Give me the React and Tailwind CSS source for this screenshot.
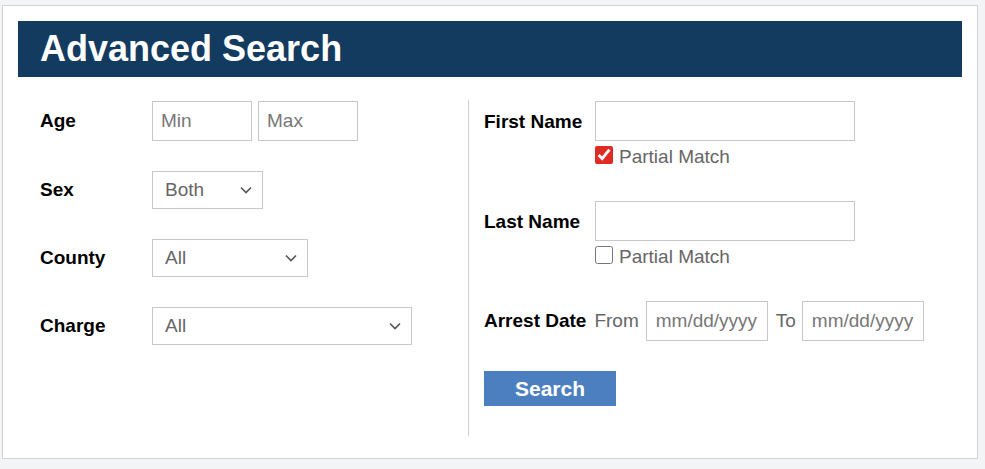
import React from "react";

const font = { fontFamily: '"Liberation Sans", Arial, sans-serif' };

function Chevron() {
  return (
    <svg
      className="pointer-events-none absolute right-[11px] top-1/2 -translate-y-1/2"
      width="12"
      height="8"
      viewBox="0 0 12 8"
      fill="none"
    >
      <path d="M1 1.5l5 5 5-5" stroke="#555" strokeWidth="1.6" />
    </svg>
  );
}

function Select({ value, width }) {
  return (
    <div className={`relative ${width}`}>
      <select
        defaultValue={value}
        className="block w-full h-[38px] appearance-none border border-[#c8c8c8] bg-white pl-3 pr-8 text-[19px] text-[#666] outline-none"
      >
        <option>{value}</option>
      </select>
      <Chevron />
    </div>
  );
}

function TextBox({ placeholder = "", width, pad = "px-2" }) {
  return (
    <input
      type="text"
      placeholder={placeholder}
      className={`block ${width} h-10 border border-[#c8c8c8] bg-white ${pad} text-[19px] text-[#666] placeholder:text-[#777] outline-none`}
    />
  );
}

function Row({ label, className = "", children }) {
  return (
    <div className={`flex items-center ${className}`}>
      <label className="w-[112px] text-[19px] font-bold text-black">{label}</label>
      {children}
    </div>
  );
}

function PartialMatch({ checked }) {
  return (
    <label className="flex items-center gap-[6px] mt-[4px] h-[20px] leading-none text-[19px] text-[#666]">
      <input
        type="checkbox"
        defaultChecked={checked}
        className="block w-[18px] h-[18px] m-0 accent-[#e02a24]"
      />
      <span className="pt-[3px]">Partial Match</span>
    </label>
  );
}

export default function App() {
  return (
    <div className="min-h-screen bg-[#f3f4f5] pt-[5px] pl-[2px] pr-[7px]" style={font}>
      <div className="h-[454px] border border-[#d2d2d2] bg-white px-[15px] pt-[15px]">
        <div className="h-14 bg-[#133a5f] pl-[22px] flex items-center">
          <h1 className="text-[36px] font-bold text-white leading-none">Advanced Search</h1>
        </div>

        <div className="flex pt-[23px]">
          {/* Left column */}
          <div className="w-[451px] pl-[22px] pt-px border-r border-[#cfcfcf] h-[336px] flex flex-col">
            <Row label="Age">
              <div className="flex gap-[6px]">
                <TextBox placeholder="Min" width="w-[100px]" />
                <TextBox placeholder="Max" width="w-[100px]" />
              </div>
            </Row>
            <Row label="Sex" className="mt-[30px]">
              <Select value="Both" width="w-[111px]" />
            </Row>
            <Row label="County" className="mt-[30px]">
              <Select value="All" width="w-[156px]" />
            </Row>
            <Row label="Charge" className="mt-[30px]">
              <Select value="All" width="w-[260px]" />
            </Row>
          </div>

          {/* Right column */}
          <div className="pl-[15px] pt-px flex flex-col">
            <div className="flex">
              <label className="w-[111px] text-[19px] font-bold text-black pt-[7px]">First Name</label>
              <div className="flex flex-col">
                <TextBox width="w-[260px]" />
                <PartialMatch checked />
              </div>
            </div>
            <div className="flex mt-[36px]">
              <label className="w-[111px] text-[19px] font-bold text-black pt-[7px]">Last Name</label>
              <div className="flex flex-col">
                <TextBox width="w-[260px]" />
                <PartialMatch checked={false} />
              </div>
            </div>
            <div className="flex items-center mt-[36px]">
              <label className="text-[19px] font-bold text-black mr-[8px]">Arrest Date</label>
              <span className="text-[19px] text-[#666] mr-[7px]">From</span>
              <TextBox placeholder="mm/dd/yyyy" width="w-[122px]" pad="px-[9px]" />
              <span className="text-[19px] text-[#666] ml-[8px] mr-[6px]">To</span>
              <TextBox placeholder="mm/dd/yyyy" width="w-[122px]" pad="px-[9px]" />
            </div>
            <button className="mt-[30px] w-[132px] h-[35px] bg-[#4c7fbf] text-white text-[21px] font-bold">
              Search
            </button>
          </div>
        </div>
      </div>
    </div>
  );
}
